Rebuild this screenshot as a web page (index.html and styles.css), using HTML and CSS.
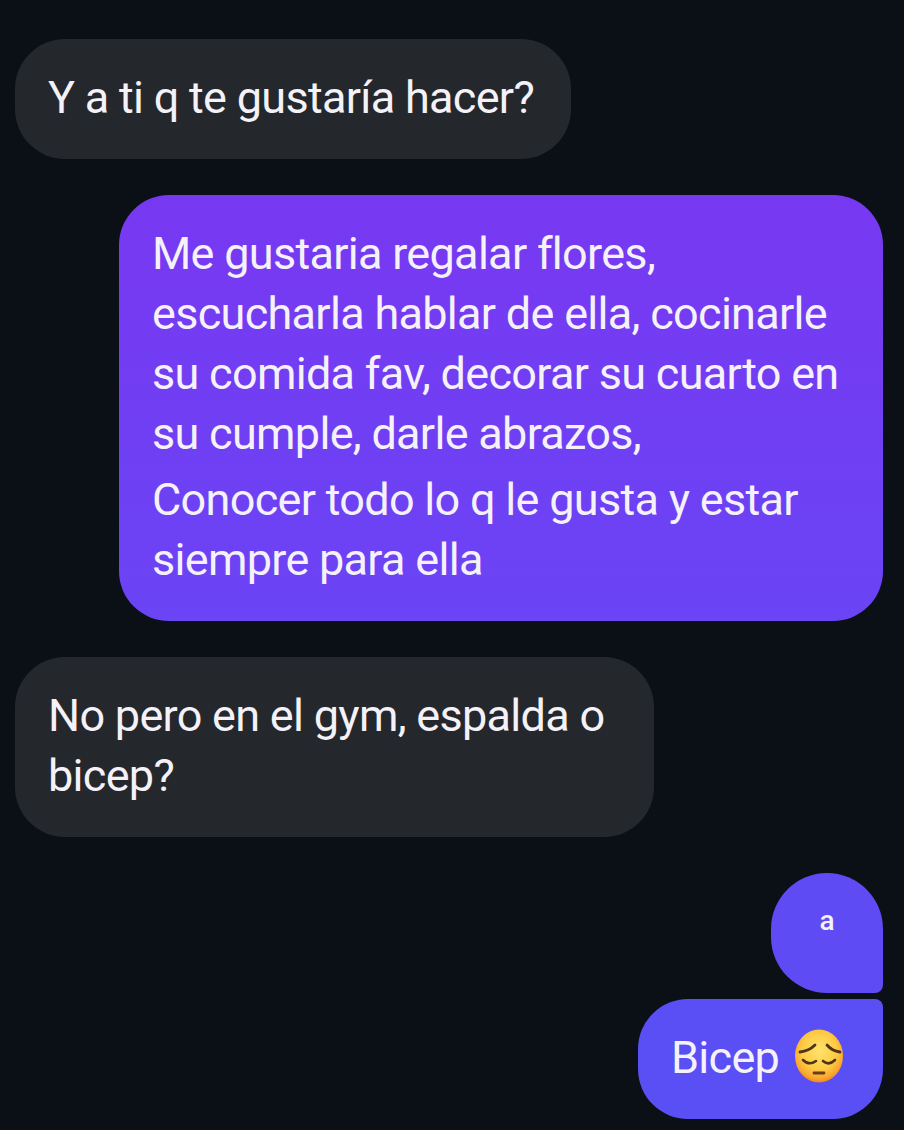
FILE: index.html
```html
<!DOCTYPE html>
<html>
<head>
  <title>Chat</title>
  <link rel="stylesheet" href="styles.css">
</head>
<body>
  <div class="chat">
    <div class="bubble received">Y a ti q te gustaría hacer?</div>

    <div class="bubble sent long">
      <p>Me gustaria regalar flores, escucharla hablar de ella, cocinarle su comida fav, decorar su cuarto en su cumple, darle abrazos,</p>
      <p class="next">Conocer todo lo q le gusta y estar siempre para ella</p>
    </div>

    <div class="bubble received wide">No pero en el gym, espalda o bicep?</div>

    <div class="group">
      <div class="bubble sent tiny">a</div>
      <div class="bubble sent last">
        Bicep
        <svg class="emoji" viewBox="0 0 50 54" width="50" height="54" aria-label="pensive face">
          <defs>
            <radialGradient id="face" cx="50%" cy="40%" r="60%">
              <stop offset="0" stop-color="#ffe36a"/>
              <stop offset="0.6" stop-color="#fecb45"/>
              <stop offset="0.88" stop-color="#f9a52e"/>
              <stop offset="1" stop-color="#ee8420"/>
            </radialGradient>
          </defs>
          <ellipse cx="25" cy="27" rx="24" ry="26.5" fill="url(#face)"/>
          <path d="M6 23 Q15 22 21 16" fill="none" stroke="#4f3519" stroke-width="2.8" stroke-linecap="round"/>
          <path d="M46 23 Q38 22 33 16" fill="none" stroke="#4f3519" stroke-width="2.8" stroke-linecap="round"/>
          <path d="M9 31 Q15 37 22 32" fill="none" stroke="#4f3519" stroke-width="2.6" stroke-linecap="round"/>
          <path d="M41 31 Q35 37 29 32" fill="none" stroke="#4f3519" stroke-width="2.6" stroke-linecap="round"/>
          <path d="M20 44 L30 44" fill="none" stroke="#6a3d18" stroke-width="2.8" stroke-linecap="round"/>
        </svg>
      </div>
    </div>
  </div>
</body>
</html>
```

FILE: styles.css
```css
body {
  margin: 0;
  background-color: #0a1015;
  font-family: Roboto, "Liberation Sans", sans-serif;
}

.chat {
  display: flex;
  flex-direction: column;
  gap: 36px;
  padding: 39px 21px 11px 15px;
}

.bubble {
  box-sizing: border-box;
  width: fit-content;
  padding: 29px 34px 31px 33px;
  border-radius: 50px;
  color: #f4f2f8;
  font-size: 45px;
  font-variant-ligatures: none;
  letter-spacing: -0.7px;
  line-height: 60px;
}

.bubble p {
  margin: 0;
}

.bubble .next {
  margin-top: 6px;
}

.received {
  background-color: #24282d;
}

.received:first-child {
  width: 556px;
}

.wide {
  width: 639px;
}

.sent {
  align-self: flex-end;
}

.long {
  width: 764px;
  background: linear-gradient(#7838f2, #6a44f5);
}

.group {
  display: flex;
  flex-direction: column;
  gap: 6px;
}

.tiny {
  width: 112px;
  height: 120px;
  padding: 30px 0;
  border-radius: 56px 56px 8px 56px;
  background-color: #5e4bf4;
  font-size: 28px;
  font-weight: 500;
  letter-spacing: 0;
  line-height: 36px;
  text-align: center;
}

.last {
  display: flex;
  align-items: center;
  gap: 15px;
  width: 245px;
  height: 120px;
  border-radius: 50px 8px 50px 50px;
  background-color: #5a4ff5;
}

.emoji {
  margin-top: -4px;
}
```
